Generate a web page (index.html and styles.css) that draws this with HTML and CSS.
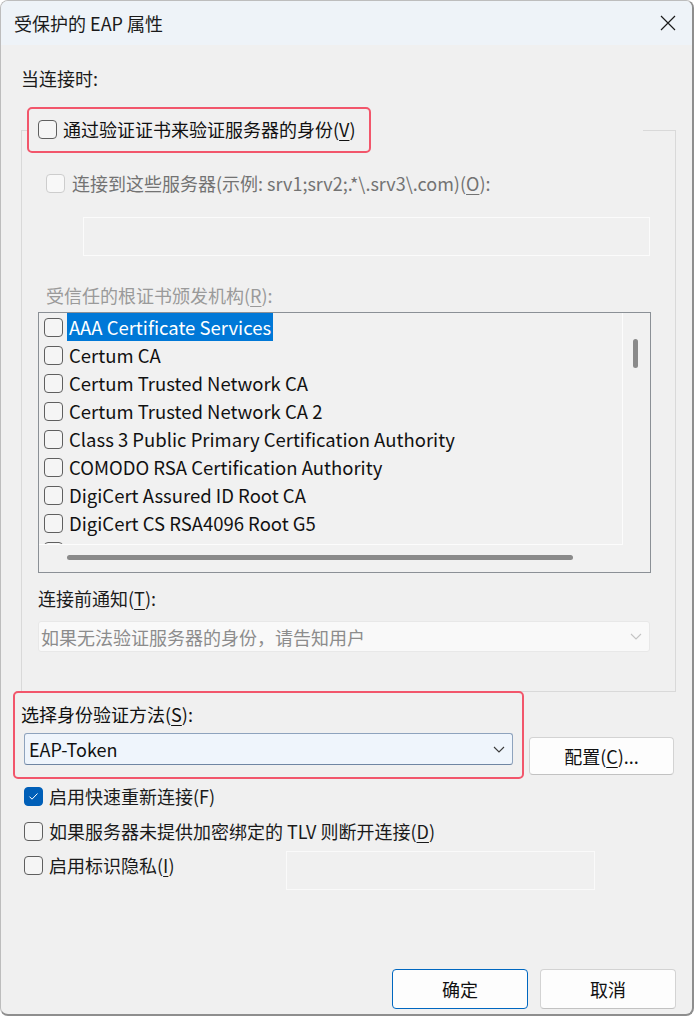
FILE: index.html
```html
<!DOCTYPE html>
<html lang="zh-CN">
<head>
<meta charset="utf-8">
<title>受保护的 EAP 属性</title>
<link rel="stylesheet" href="styles.css">
</head>
<body>
<div class="window">
  <div class="titlebar">
    <span class="title">受保护的 EAP 属性</span>
    <svg class="close" width="16" height="16" viewBox="0 0 16 16"><path d="M1 1L15 15M15 1L1 15" stroke="#1a1a1a" stroke-width="1.2" fill="none"/></svg>
  </div>
  <div class="content">
    <div class="section-label">当连接时:</div>
    <fieldset class="group">
      <legend class="group-legend">
        <span class="highlight hl-legend">
          <span class="cb"></span>
          <span class="cb-text">通过验证证书来验证服务器的身份(<u>V</u>)</span>
        </span>
      </legend>
      <div class="group-body">
        <div class="row disabled row-servers">
          <span class="cb cb-disabled"></span>
          <span>连接到这些服务器(示例: srv1;srv2;.*\.srv3\.com)(<u>O</u>):</span>
        </div>
        <div class="textbox tb-servers"></div>
        <div class="label disabled label-ca">受信任的根证书颁发机构(<u>R</u>):</div>
        <div class="listbox">
          <div class="list-items">
            <div class="item selected"><span class="cb"></span><span class="item-text">AAA Certificate Services</span></div>
            <div class="item"><span class="cb"></span><span class="item-text">Certum CA</span></div>
            <div class="item"><span class="cb"></span><span class="item-text">Certum Trusted Network CA</span></div>
            <div class="item"><span class="cb"></span><span class="item-text">Certum Trusted Network CA 2</span></div>
            <div class="item"><span class="cb"></span><span class="item-text">Class 3 Public Primary Certification Authority</span></div>
            <div class="item"><span class="cb"></span><span class="item-text">COMODO RSA Certification Authority</span></div>
            <div class="item"><span class="cb"></span><span class="item-text">DigiCert Assured ID Root CA</span></div>
            <div class="item"><span class="cb"></span><span class="item-text">DigiCert CS RSA4096 Root G5</span></div>
            <div class="item"><span class="cb"></span></div>
          </div>
          <div class="vscroll"><span class="vthumb"></span></div>
          <div class="hscroll"><span class="hthumb"></span></div>
        </div>
        <div class="label label-notify">连接前通知(<u>T</u>):</div>
        <div class="select select-disabled">
          <span>如果无法验证服务器的身份，请告知用户</span>
          <svg class="chev" width="12" height="7" viewBox="0 0 12 7"><path d="M1 1L6 6L11 1" stroke="#c4c4c4" stroke-width="1.1" fill="none"/></svg>
        </div>
      </div>
    </fieldset>
    <div class="method-row">
      <div class="highlight hl-method">
        <div class="label label-method">选择身份验证方法(<u>S</u>):</div>
        <div class="select select-active">
          <span>EAP-Token</span>
          <svg class="chev" width="12" height="7" viewBox="0 0 12 7"><path d="M1 1L6 6L11 1" stroke="#3a3a3a" stroke-width="1.1" fill="none"/></svg>
        </div>
      </div>
      <button class="btn btn-config">配置(<u>C</u>)...</button>
    </div>
    <div class="options">
      <div class="row opt">
        <span class="cb cb-checked"><svg width="11" height="9" viewBox="0 0 11 9"><path d="M1.5 4.6L4 7.2L9.5 1.5" stroke="#ffffff" stroke-width="1" fill="none"/></svg></span>
        <span>启用快速重新连接(F)</span>
      </div>
      <div class="row opt">
        <span class="cb"></span>
        <span>如果服务器未提供加密绑定的 TLV 则断开连接(<u>D</u>)</span>
      </div>
      <div class="privacy-row">
        <div class="row opt opt-privacy">
          <span class="cb"></span>
          <span>启用标识隐私(<u>I</u>)</span>
        </div>
        <div class="textbox tb-privacy"></div>
      </div>
    </div>
    <div class="footer">
      <button class="btn btn-default">确定</button>
      <button class="btn">取消</button>
    </div>
  </div>
</div>
</body>
</html>
```

FILE: styles.css
```css
* { box-sizing: border-box; }

html, body {
  margin: 0;
  padding: 0;
  background: #ffffff;
}

body {
  font-family: "Noto Sans CJK SC", "Noto Sans", sans-serif;
  font-size: 18px;
  color: #1a1a1a;
}

u { text-underline-offset: 3px; text-decoration-thickness: 1px; }

.window {
  width: 694px;
  height: 1016px;
  display: flex;
  flex-direction: column;
  background: #f0f0f0;
  border: 1px solid #bdbdbd;
  border-right: 2px solid #8e8e8e;
  border-bottom: 2px solid #8e8e8e;
  border-radius: 8px;
  overflow: hidden;
}

.titlebar {
  height: 44px;
  flex: none;
  display: flex;
  align-items: center;
  justify-content: space-between;
  padding: 0 16px 0 13px;
  background: #eef3f8;
}

.title { line-height: 24px; }

.close { display: block; }

.content {
  flex: 1;
  display: flex;
  flex-direction: column;
  padding: 0 16px 5px 20px;
}

.section-label {
  margin-top: 21px;
  line-height: 24px;
}

.group {
  margin: 17px 0 0;
  padding: 0;
  border: 1px solid #d9d9d9;
  min-width: 0;
}

.group-legend {
  margin-left: 5px;
  padding: 0;
  width: 616px;
}

.highlight {
  border: 2px solid #f2566b;
  border-radius: 5px;
}

.hl-legend {
  display: flex;
  align-items: center;
  width: 344px;
  height: 46px;
  padding: 0 0 2px 9px;
  gap: 6px;
  line-height: 24px;
  color: #111;
}

.group-body {
  padding: 0 24px 39px 16px;
}

.row {
  display: flex;
  align-items: center;
  height: 24px;
  line-height: 24px;
  gap: 6px;
  white-space: nowrap;
}

.cb {
  width: 19px;
  height: 19px;
  flex: none;
  border: 1px solid #5f5f5f;
  border-radius: 4px;
  background: #f5f5f5;
  display: flex;
  align-items: center;
  justify-content: center;
}

.cb-disabled {
  border-color: #cdcdcd;
  background: #f8f8f8;
}

.cb-checked {
  border-color: #005fb8;
  background: #005fb8;
}

.disabled { color: #737373; }

.row-servers {
  margin-top: 18px;
  margin-left: 8px;
  gap: 7px;
}

.textbox {
  height: 39px;
  border: 1px solid #fbfbfb;
  background: #f0f0f0;
}

.tb-servers {
  margin: 22px 1px 0 45px;
}

.label {
  line-height: 24px;
  white-space: nowrap;
}

.label-ca {
  margin-top: 27px;
  margin-left: 8px;
  color: #9a9a9a;
}

.listbox {
  margin-top: 5px;
  height: 261px;
  border: 1px solid #8b9096;
  background: #f1f1f1;
  display: grid;
  grid-template-columns: 1fr 27px;
  grid-template-rows: 1fr 27px;
}

.list-items {
  border-right: 1px solid #fcfcfc;
  border-bottom: 1px solid #fcfcfc;
  overflow: hidden;
  padding: 0 0 0 5px;
}

.item {
  display: flex;
  align-items: center;
  height: 28px;
  gap: 4px;
  white-space: nowrap;
}

.item-text {
  padding: 0 2px;
  font-size: 18.5px;
  line-height: 28px;
  color: #111;
}

.item.selected .item-text {
  background: #0078d7;
  color: #ffffff;
}

.vscroll {
  padding: 26px 0 0 10px;
}

.vthumb {
  display: block;
  width: 5px;
  height: 29px;
  border-radius: 3px;
  background: #8a8a8a;
}

.hscroll {
  grid-column: 1 / 3;
  padding: 10px 0 0 28px;
}

.hthumb {
  display: block;
  width: 506px;
  height: 5px;
  border-radius: 3px;
  background: #8a8a8a;
}

.label-notify {
  margin-top: 13px;
  color: #1a1a1a;
}

.select {
  display: flex;
  align-items: center;
  justify-content: space-between;
  border-radius: 3px;
  white-space: nowrap;
}

.select-disabled {
  margin: 11px 1px 0 0;
  height: 31px;
  border: 1px solid #e8e8e8;
  background: #f9f9f9;
  color: #8c8c8c;
  padding: 0 7px 0 2px;
}

.chev { display: block; }

.method-row {
  display: flex;
  align-items: flex-start;
  gap: 5px;
  margin: -1px 0 0 -8px;
}

.hl-method {
  width: 511px;
  height: 88px;
  padding: 9px 9px 0 9px;
}

.label-method {
  margin-left: -3px;
  color: #111;
}

.select-active {
  margin-top: 7px;
  height: 32px;
  border: 1px solid #8ea3bd;
  border-bottom-color: #6f86a3;
  background: #eff5fc;
  color: #111;
  padding: 0 7px 0 4px;
}

.btn {
  font-family: inherit;
  font-size: 18px;
  color: #111;
  background: #fdfdfd;
  border: 1px solid #d3d3d3;
  border-bottom-color: #c2c2c2;
  border-radius: 4px;
  padding: 0;
  line-height: 24px;
}

.btn-config {
  margin-top: 46px;
  width: 145px;
  height: 38px;
}

.options {
  padding-left: 3px;
}

.opt { margin-top: 11px; }

.options > .opt:first-child { margin-top: 5px; }

.privacy-row {
  display: flex;
  align-items: flex-start;
  margin-top: 10px;
}

.opt-privacy {
  margin-top: 0;
  width: 262px;
}

.tb-privacy {
  width: 309px;
  margin-top: -2px;
  border-color: #fafafa;
}

.footer {
  margin-top: auto;
  display: flex;
  justify-content: flex-end;
  gap: 12px;
}

.footer .btn {
  width: 136px;
  height: 40px;
}

.btn-default {
  border-color: #0067c0;
}
```
